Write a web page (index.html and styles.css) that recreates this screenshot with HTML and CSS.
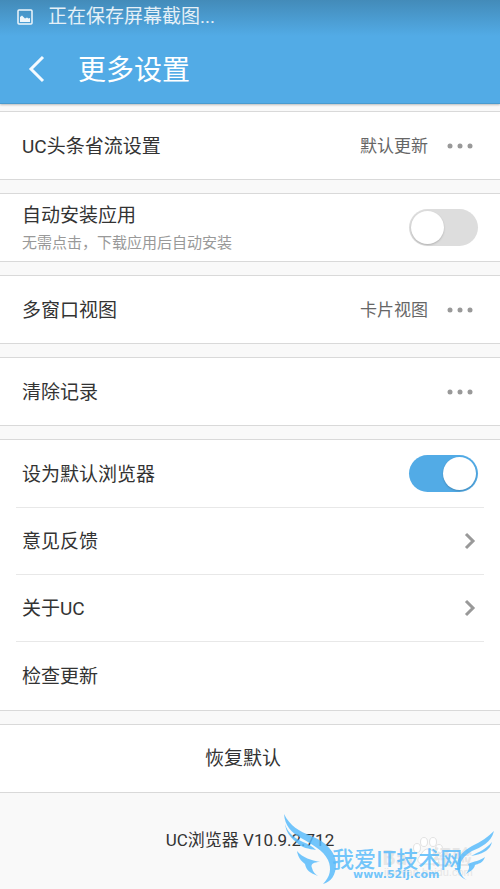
FILE: index.html
```html
<!DOCTYPE html>
<html lang="zh-CN">
<head>
<meta charset="utf-8">
<meta name="viewport" content="width=device-width, initial-scale=1">
<title>更多设置</title>
<link rel="stylesheet" href="styles.css">
</head>
<body>
<header class="header">
  <div class="status">
    <svg class="status-icon" viewBox="0 0 16 16" aria-hidden="true"><rect x="1" y="1" width="14" height="14" rx="1" fill="none" stroke="#eef6fb" stroke-width="1.500"/><path d="M3 13V8l2-1.500 3 3 2-1 1.500 1L13 9v4z" fill="#eef6fb"/></svg>
    <span>正在保存屏幕截图...</span>
  </div>
  <div class="titlebar">
    <button class="back" type="button" aria-label="返回"><svg viewBox="0 0 17 28" aria-hidden="true"><path d="M15 2 3 14l12 12" fill="none" stroke="#f4faff" stroke-width="3"/></svg></button>
    <h1>更多设置</h1>
  </div>
</header>
<main class="settings">
  <section class="card"><button class="row" type="button"><span class="label">UC头条省流设置</span><span class="value">默认更新</span><svg class="dots" viewBox="0 0 28 6" aria-hidden="true"><circle cx="4" cy="3" r="2.500"/><circle cx="14" cy="3" r="2.500"/><circle cx="24" cy="3" r="2.500"/></svg></button></section>
  <section class="card"><label class="row"><span class="label">自动安装应用<small>无需点击，下载应用后自动安装</small></span><input class="switch" type="checkbox"></label></section>
  <section class="card"><button class="row" type="button"><span class="label">多窗口视图</span><span class="value">卡片视图</span><svg class="dots" viewBox="0 0 28 6" aria-hidden="true"><circle cx="4" cy="3" r="2.500"/><circle cx="14" cy="3" r="2.500"/><circle cx="24" cy="3" r="2.500"/></svg></button></section>
  <section class="card"><button class="row" type="button"><span class="label">清除记录</span><svg class="dots" viewBox="0 0 28 6" aria-hidden="true"><circle cx="4" cy="3" r="2.500"/><circle cx="14" cy="3" r="2.500"/><circle cx="24" cy="3" r="2.500"/></svg></button></section>
  <section class="card">
    <label class="row"><span class="label">设为默认浏览器</span><input class="switch" type="checkbox" checked></label>
    <button class="row" type="button"><span class="label">意见反馈</span><svg class="chevron" viewBox="0 0 12 18" aria-hidden="true"><path d="m2 2 7 7-7 7"/></svg></button>
    <button class="row" type="button"><span class="label">关于UC</span><svg class="chevron" viewBox="0 0 12 18" aria-hidden="true"><path d="m2 2 7 7-7 7"/></svg></button>
    <button class="row" type="button"><span class="label">检查更新</span></button>
  </section>
  <section class="card"><button class="row reset" type="button">恢复默认</button></section>
</main>
<footer class="footer">
  <p>UC浏览器 V10.9.2.712</p>
  <div class="watermark">
    <svg viewBox="0 0 230 89" role="img" aria-label="我爱IT技术网 www.52ij.com">
      <g fill="#fff" stroke="#e2e2e2" stroke-width="1">
        <ellipse cx="147" cy="47" rx="3.500" ry="4.500"/><ellipse cx="154" cy="41" rx="3.500" ry="4.500"/><ellipse cx="163" cy="41" rx="3.500" ry="4.500"/><ellipse cx="169" cy="48" rx="3.500" ry="4.500"/><path d="M158 48c-5 0-6 5-9 8-3 4 0 7 4 7h11c5 0 6-4 3-7-4-4-4-8-9-8z"/>
      </g>
      <g fill="#e6e6e6">
        <text class="baidu" x="112" y="64">Bai</text><text class="baidu" x="162" y="64">经验</text><text class="baidu-url" x="114" y="75">jingyan.baidu.com</text>
      </g>
      <g fill="#54b9fb" fill-opacity=".82">
        <path d="M14 13C20 25 29 30 41 35C57 41 66 52 66 63C66 74 61 81 53 83C60 76 62 68 58 59C53 49 43 44 31 37C21 31 15 25 14 13z"/>
        <path d="M15 23C18 33 25 37 33 41C39 43 43 46 46 49C39 48 32 47 26 41C19 35 16 30 15 23z"/>
        <path d="M27 50C33 57 41 59 50 61C44 61 40 63 42 67C43 71 45 73 48 75C40 72 36 69 35 63C31 60 28 56 27 50z"/>
        <path d="M224 30C221 42 211 46 202 50C193 55 190 61 190 67C190 73 193 77 197 79C190 77 187 71 187 65C187 56 193 50 202 45C211 41 218 36 224 30z"/>
        <path d="M222 41C220 49 214 52 206 54L201 55C209 51 216 48 222 41z"/>
        <path d="M215 56C213 62 208 63 205 64C204 69 200 70 196 73C199 69 200 66 198 63C204 60 210 60 215 56z"/>
        <text class="brand" x="62" y="66">我爱IT技术网</text><text class="brand-url" x="83" y="77">www.52ij.com</text>
      </g>
    </svg>
  </div>
</footer>
</body>
</html>
```
FILE: styles.css
```css
* { box-sizing: border-box; }
body { margin: 0; background: #f9f9f9; color: #333; font-family: Roboto, "Noto Sans CJK SC", sans-serif; font-size: 19px; line-height: 28px; }
button { font: inherit; color: inherit; background: none; border: 0; padding: 0; text-align: left; }
.header { height: 104px; background: linear-gradient(#438bb9, #52abe6 36px); color: #fff; border-bottom: 1px solid #489bd0; box-shadow: 0 1px 2px #bbb; }
.status { display: flex; align-items: center; height: 34px; padding-left: 17px; gap: 15px; color: #e5f0f7; }
.status-icon { width: 16px; height: 16px; }
.titlebar { display: flex; align-items: center; height: 70px; padding-left: 28px; gap: 33px; }
.back { display: flex; }
.back svg { width: 17px; height: 28px; }
h1 { margin: 0; padding-top: 4px; font-size: 28px; font-weight: 400; line-height: 40px; }
.settings { display: grid; gap: 13px; padding-top: 7px; }
.card { background: #fff; border: solid #d9d9d9; border-width: 1px 0; }
.row { display: flex; align-items: center; width: calc(100% - 32px); min-height: 67px; margin: 0 16px; padding: 0 6px; }
.row + .row { border-top: 1px solid #e8e8e8; }
.row:last-child:not(:first-child) { min-height: 69px; }
.label { flex: 1; padding-top: 2px; }
.label small { display: block; color: #999; font-size: 15px; line-height: 26px; }
.value { color: #666; font-size: 17px; margin-right: 18px; }
.dots { width: 28px; height: 6px; margin-right: 4px; fill: #999; }
.chevron { width: 12px; height: 18px; margin-right: 2px; fill: none; stroke: #999; stroke-width: 3; }
.switch { appearance: none; display: flex; width: 69px; height: 37px; margin: 0; padding: 2px; border-radius: 19px; background: #ddd; }
.switch::before { content: ""; width: 33px; height: 33px; border-radius: 50%; background: #fff; box-shadow: 0 1px 2px #0003; }
.switch:checked { justify-content: flex-end; background: #52abe6; }
.reset { justify-content: center; padding-right: 20px; }
.footer { position: relative; height: 97px; padding-top: 33px; overflow: hidden; font-size: 17px; text-align: center; }
.footer p { margin: 0; }
.watermark { position: absolute; right: 0; bottom: 0; width: 230px; height: 89px; }
.watermark svg { display: block; }
.brand { font: 500 22px "Noto Sans CJK SC", sans-serif; }
.brand-url { font: 700 11px "DejaVu Sans", sans-serif; }
.baidu { font: 700 20px "Noto Sans CJK SC", sans-serif; }
.baidu-url { font: 11px "Liberation Sans", sans-serif; }
```
